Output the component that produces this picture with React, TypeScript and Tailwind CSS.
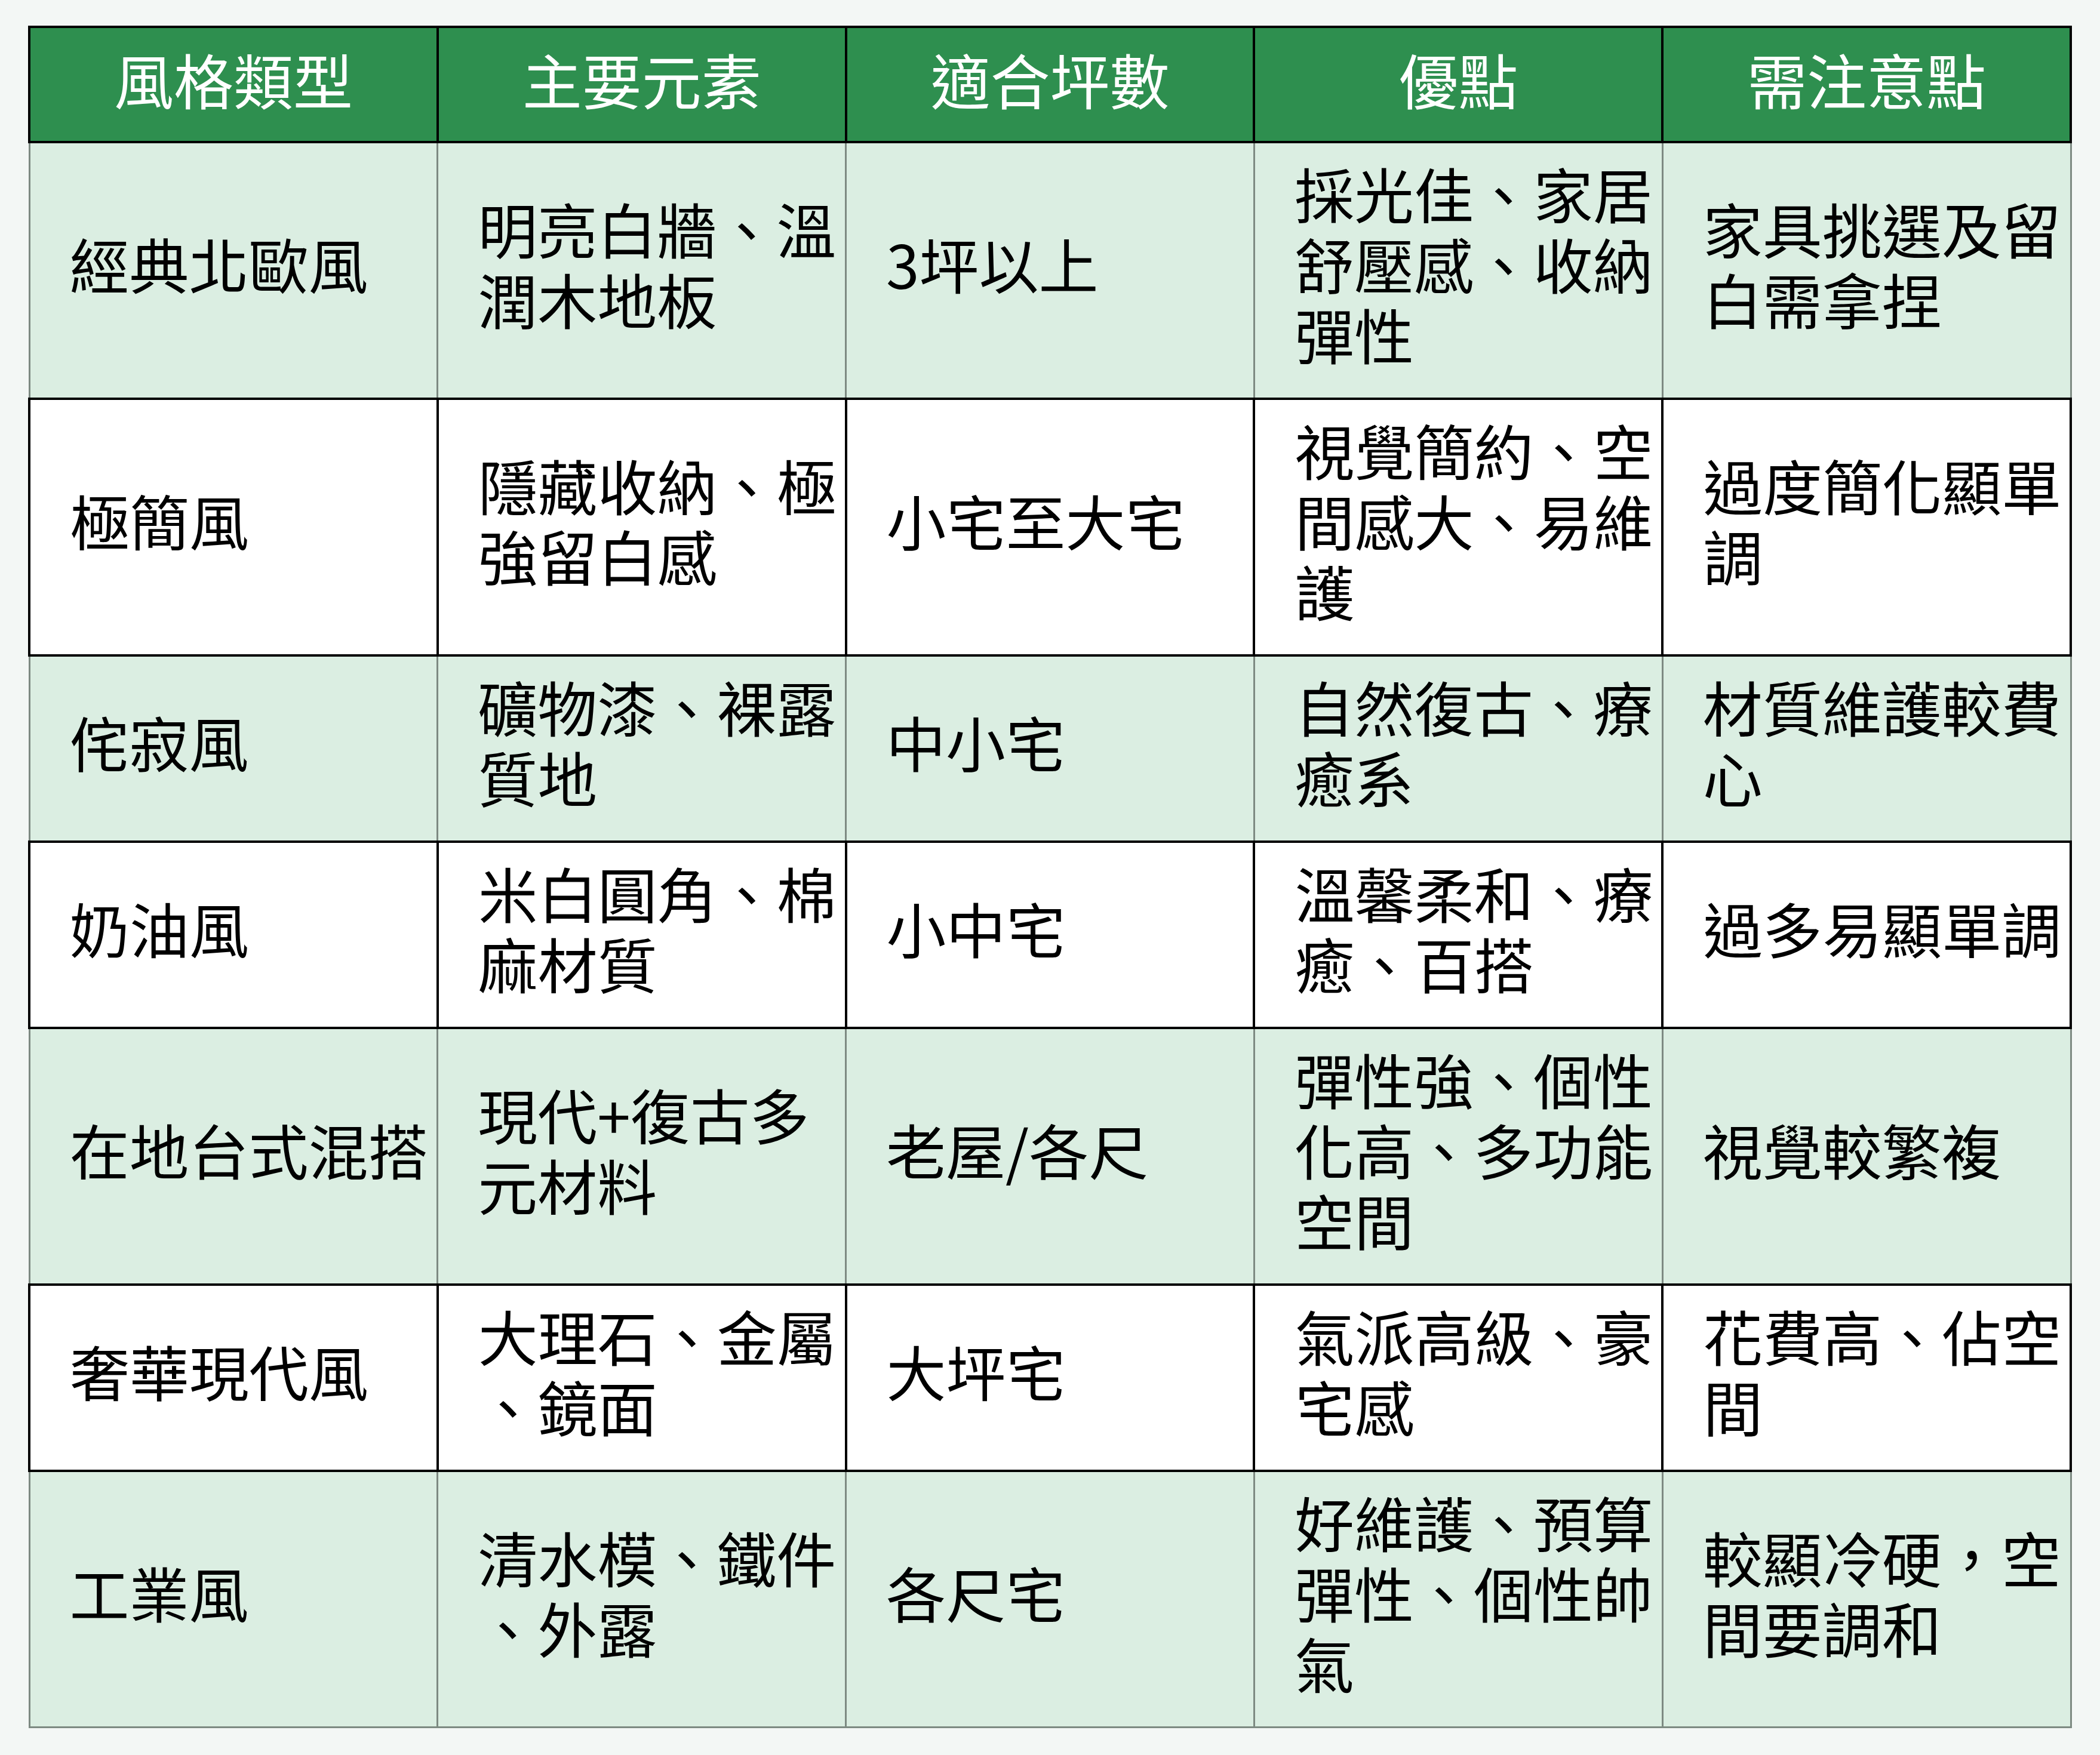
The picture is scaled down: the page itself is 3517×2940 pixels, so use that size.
import React from 'react';

const headers = ['風格類型', '主要元素', '適合坪數', '優點', '需注意點'];

/* Each cell is a list of lines, matching the reference's line breaks */
const rows: string[][][] = [
  [['經典北歐風'], ['明亮白牆、溫', '潤木地板'], ['3坪以上'], ['採光佳、家居', '舒壓感、收納', '彈性'], ['家具挑選及留', '白需拿捏']],
  [['極簡風'], ['隱藏收納、極', '強留白感'], ['小宅至大宅'], ['視覺簡約、空', '間感大、易維', '護'], ['過度簡化顯單', '調']],
  [['侘寂風'], ['礦物漆、裸露', '質地'], ['中小宅'], ['自然復古、療', '癒系'], ['材質維護較費', '心']],
  [['奶油風'], ['米白圓角、棉', '麻材質'], ['小中宅'], ['溫馨柔和、療', '癒、百搭'], ['過多易顯單調']],
  [['在地台式混搭'], ['現代+復古多', '元材料'], ['老屋/各尺'], ['彈性強、個性', '化高、多功能', '空間'], ['視覺較繁複']],
  [['奢華現代風'], ['大理石、金屬', '、鏡面'], ['大坪宅'], ['氣派高級、豪', '宅感'], ['花費高、佔空', '間']],
  [['工業風'], ['清水模、鐵件', '、外露'], ['各尺宅'], ['好維護、預算', '彈性、個性帥', '氣'], ['較顯冷硬，空', '間要調和']],
];

export default function App() {
  return (
    <div
      className="min-h-screen bg-[#f3f7f5] pt-[43px] pl-[47px]"
      style={{ fontFamily: '"Noto Sans CJK TC", "Noto Sans", sans-serif' }}
    >
      <table className="w-[3423px] table-fixed border-collapse text-[100px] leading-[118px]">
        <thead>
          <tr>
            {headers.map(h => (
              <th
                key={h}
                className="border-[4px] border-black bg-[#2e8f4f] pt-[26px] pb-[45px] text-center font-normal text-white whitespace-nowrap"
              >
                {h}
              </th>
            ))}
          </tr>
        </thead>
        <tbody>
          {rows.map((row, i) => {
            const tinted = i % 2 === 0;
            return (
              <tr key={i} className={tinted ? 'bg-[#dbeee2]' : 'bg-white'}>
                {row.map((lines, j) => (
                  <td
                    key={j}
                    className={
                      'pl-[66px] pr-[8px] pt-[24px] pb-[48px] align-middle text-black whitespace-nowrap ' +
                      (tinted ? 'border-[3px] border-[#7d8a82]' : 'border-[4px] border-black')
                    }
                  >
                    {lines.map((l, k) => (
                      <div key={k}>{l}</div>
                    ))}
                  </td>
                ))}
              </tr>
            );
          })}
        </tbody>
      </table>
    </div>
  );
}
